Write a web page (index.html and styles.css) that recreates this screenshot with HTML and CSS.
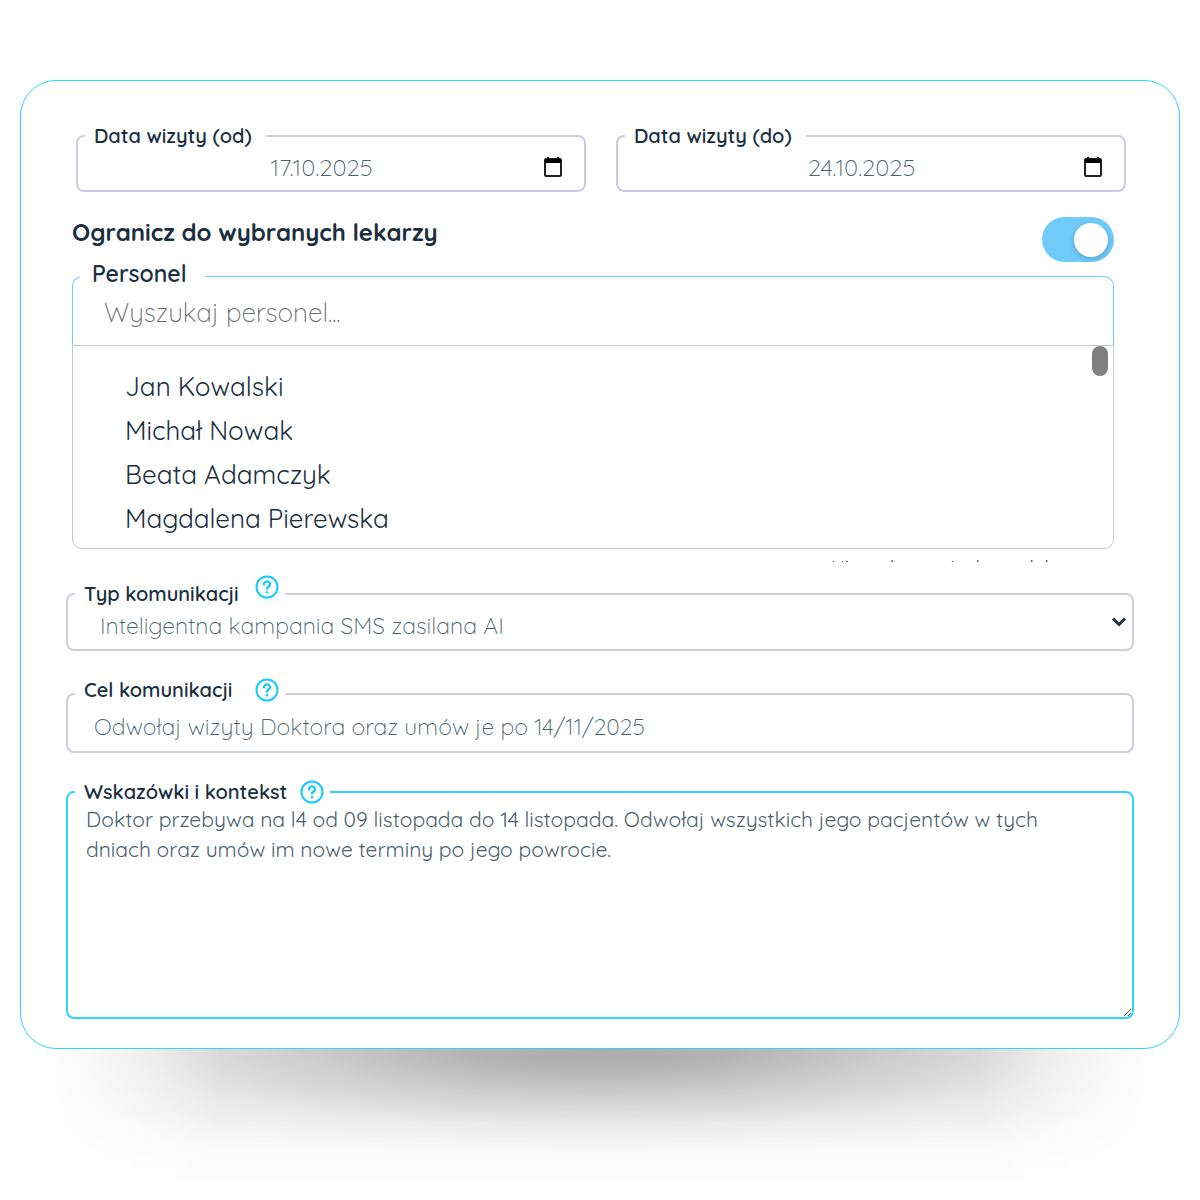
FILE: index.html
```html
<!DOCTYPE html>
<html lang="pl">
<head>
    <meta charset="UTF-8">
    <meta name="viewport" content="width=device-width, initial-scale=1.0">
    <title>Kampania</title>
    <link rel="stylesheet" href="styles.css">
</head>
<body>

    <form class="card">
        <div class="dates">
            <fieldset class="field">
                <legend><label for="dateFrom">Data wizyty (od)</label></legend>
                <div class="date-row">
                    <input type="text" id="dateFrom" value="17.10.2025">
                    <button type="button" class="icon-btn" aria-label="Wybierz datę od">
                        <svg width="20" height="22" viewBox="0 0 20 22"><path d="M5 1v3M15 1v3" stroke="#000" stroke-width="2"/><rect x="2" y="3" width="16" height="17" rx="1" fill="none" stroke="#222" stroke-width="2"/><path d="M2 3h16v4H2z"/></svg>
                    </button>
                </div>
            </fieldset>
            <fieldset class="field">
                <legend><label for="dateTo">Data wizyty (do)</label></legend>
                <div class="date-row">
                    <input type="text" id="dateTo" value="24.10.2025">
                    <button type="button" class="icon-btn" aria-label="Wybierz datę do">
                        <svg width="20" height="22" viewBox="0 0 20 22"><path d="M5 1v3M15 1v3" stroke="#000" stroke-width="2"/><rect x="2" y="3" width="16" height="17" rx="1" fill="none" stroke="#222" stroke-width="2"/><path d="M2 3h16v4H2z"/></svg>
                    </button>
                </div>
            </fieldset>
        </div>

        <div class="staff">
            <div class="limit-row">
                <label class="limit-label" for="limit">Ogranicz do wybranych lekarzy</label>
                <input type="checkbox" role="switch" id="limit" class="switch" checked>
            </div>
            <fieldset class="field search">
                <legend><label for="staffSearch">Personel</label></legend>
                <input type="text" id="staffSearch" placeholder="Wyszukaj personel...">
            </fieldset>
            <div class="results">
                <ul>
                    <li>Jan Kowalski</li>
                    <li>Michał Nowak</li>
                    <li>Beata Adamczyk</li>
                    <li>Magdalena Pierewska</li>
                </ul>
                <span class="thumb"></span>
            </div>
            <p class="status">Nie wybrano żadnego lekarza</p>
        </div>

        <fieldset class="field type">
            <legend>
                <label for="type">Typ komunikacji</label>
                <button type="button" class="icon-btn" aria-label="Pomoc: typ komunikacji">
                    <svg width="24" height="24" viewBox="0 0 24 24" fill="none" stroke="#12cdfb" stroke-width="2" stroke-linecap="round"><circle cx="12" cy="12" r="10.5"/><path d="M9 9.2a3 2.8 0 1 1 4.6 2.4c-1 .6-1.6 1-1.6 2" stroke-width="2.4"/><path d="M12 17.2v.1" stroke-width="2.6"/></svg>
                </button>
            </legend>
            <div class="select-row">
                <select id="type">
                    <option>Inteligentna kampania SMS zasilana AI</option>
                </select>
                <svg class="chevron" width="14" height="10" viewBox="0 0 14 10" fill="none" stroke="#1b2f3f" stroke-width="3"><path d="M1 1.5l6 6 6-6"/></svg>
            </div>
        </fieldset>

        <fieldset class="field goal">
            <legend>
                <label for="goal">Cel komunikacji</label>
                <button type="button" class="icon-btn" aria-label="Pomoc: cel komunikacji">
                    <svg width="24" height="24" viewBox="0 0 24 24" fill="none" stroke="#12cdfb" stroke-width="2" stroke-linecap="round"><circle cx="12" cy="12" r="10.5"/><path d="M9 9.2a3 2.8 0 1 1 4.6 2.4c-1 .6-1.6 1-1.6 2" stroke-width="2.4"/><path d="M12 17.2v.1" stroke-width="2.6"/></svg>
                </button>
            </legend>
            <input type="text" id="goal" value="Odwołaj wizyty Doktora oraz umów je po 14/11/2025">
        </fieldset>

        <fieldset class="field context">
            <legend>
                <label for="context">Wskazówki i kontekst</label>
                <button type="button" class="icon-btn" aria-label="Pomoc: wskazówki i kontekst">
                    <svg width="24" height="24" viewBox="0 0 24 24" fill="none" stroke="#12cdfb" stroke-width="2" stroke-linecap="round"><circle cx="12" cy="12" r="10.5"/><path d="M9 9.2a3 2.8 0 1 1 4.6 2.4c-1 .6-1.6 1-1.6 2" stroke-width="2.4"/><path d="M12 17.2v.1" stroke-width="2.6"/></svg>
                </button>
            </legend>
            <textarea id="context" spellcheck="false">Doktor przebywa na l4 od 09 listopada do 14 listopada. Odwołaj wszystkich jego pacjentów w tych dniach oraz umów im nowe terminy po jego powrocie.</textarea>
        </fieldset>
    </form>
    <div class="shadow"></div>

</body>
</html>
```

FILE: styles.css
```css
* { box-sizing: border-box; }

body {
    margin: 0;
    padding: 80px 20px 0;
    background: #fff;
    color: #1b2f3f;
    font-family: Quicksand, Inter, sans-serif;
    font-size: 20px;
}

input, select, textarea, button {
    display: block;
    width: 100%;
    margin: 0;
    padding: 0;
    border: 0;
    outline: 0;
    background: none;
    color: #4d5f6e;
    font: inherit;
    font-size: 23px;
    font-weight: 300;
}

.card {
    padding: 43px 45px 29px;
    border: 1px solid #2dd6fb;
    border-radius: 36px;
    background: #fff;
}

/* soft shadow under the card */
.shadow {
    height: 150px;
    margin: 0 20px;
    background-image:
        radial-gradient(ellipse 58% 105px at 50% 0, rgba(0, 0, 0, 0.29), rgba(0, 0, 0, 0.25) 20%, rgba(0, 0, 0, 0.14) 46%, rgba(0, 0, 0, 0.04) 74%, rgba(0, 0, 0, 0)),
        linear-gradient(rgba(0, 0, 0, 0.06), rgba(0, 0, 0, 0.05) 40%, rgba(0, 0, 0, 0.01) 75%, rgba(0, 0, 0, 0));
    mask-image: linear-gradient(to right, transparent, #000 16%, #000 84%, transparent);
}

.field {
    min-width: 0;
    margin: 0;
    padding: 0;
    border: 2px solid #cccde2;
    border-radius: 8px;
}

.field legend {
    display: flex;
    align-items: flex-start;
    height: 24px;
    margin-left: 7px;
    padding: 0 6px 0 9px;
    font-weight: 600;
    line-height: 24px;
}

.icon-btn { flex: none; width: auto; cursor: pointer; }
.icon-btn svg { display: block; }

.dates {
    display: grid;
    grid-template-columns: 1fr 1fr;
    gap: 30px;
    margin: 0 8px 0 10px;
}
.dates legend { padding-right: 14px; }
.date-row {
    display: flex;
    align-items: center;
    height: 42px;
    padding: 0 21px 4px 22px;
}
.date-row input { font-size: 24px; text-align: center; }

.staff { margin: 25px 20px 0 6px; }
.limit-row {
    display: flex;
    justify-content: space-between;
    height: 45px;
}
.limit-label { font-size: 24px; font-weight: 700; line-height: 30px; }

.switch {
    flex: none;
    width: 72px;
    height: 45px;
    padding: 6px;
    border-radius: 23px;
    background: #70cbfb;
    appearance: none;
}
.switch::before {
    content: "";
    display: block;
    width: 34px;
    height: 34px;
    border-radius: 50%;
    background: #fff;
    box-shadow: 0 2px 6px rgba(0, 0, 0, 0.2);
}
.switch:checked::before { margin-left: auto; }

.search {
    border: 1px solid #70cbfb;
    border-bottom: 0;
    border-radius: 10px 10px 0 0;
}
.search legend { height: 28px; padding: 0 18px 0 12px; font-size: 23px; }
.search input { height: 55px; padding: 0 31px 10px; font-size: 26px; }
.search input::placeholder { color: #6c6c6c; }

.results {
    position: relative;
    border: 1px solid #c6c8d8;
    border-radius: 0 0 10px 10px;
}
.results ul {
    margin: 0;
    padding: 19px 52px 7px;
    list-style: none;
    font-size: 26px;
    line-height: 44px;
}
.thumb {
    position: absolute;
    top: 0;
    right: 5px;
    width: 16px;
    height: 30px;
    border-radius: 8px;
    background: #808080;
}

.status {
    height: 4px;
    margin: 9px 20px 0;
    overflow: hidden;
    font-size: 19px;
    line-height: 18px;
    text-align: right;
}

.type { margin-top: 13px; }
.type legend { height: 38px; width: 210px; justify-content: space-between; }
.type label { line-height: 38px; }
.select-row {
    display: grid;
    grid-template-rows: 100%;
    align-items: center;
    height: 36px;
    padding-bottom: 12px;
}
.select-row > * { grid-area: 1 / 1; }
.select-row select { padding-left: 32px; appearance: none; }
.chevron { justify-self: end; margin: 0 6px 6px 0; pointer-events: none; }

.goal { margin-top: 27px; }
.goal legend { height: 32px; width: 210px; justify-content: space-between; }
.goal input { height: 41px; padding: 0 26px 9px; }

.context { margin-top: 27px; border-color: #2dd6fb; }
.context legend { gap: 13px; }
.context textarea {
    height: 213px;
    padding: 0 30px 0 18px;
    font-size: 21px;
    font-weight: 400;
    line-height: 30px;
    resize: vertical;
}
```
